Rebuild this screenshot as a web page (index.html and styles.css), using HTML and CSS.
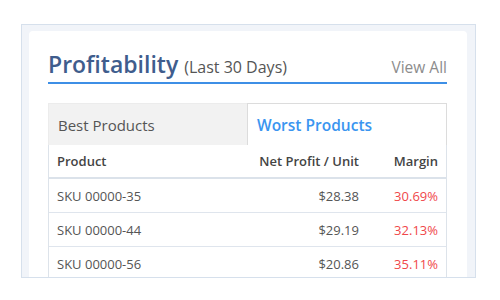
FILE: index.html
```html
<!DOCTYPE html>
<html>
<head>
<meta charset="utf-8">
<link rel="stylesheet" href="styles.css">
</head>
<body>
<div class="frame">
  <div class="card">
    <div class="head">
      <h2 class="title">Profitability <span class="sub">(Last 30 Days)</span></h2>
      <a class="view-all">View All</a>
    </div>
    <div class="tabs">
      <div class="tab">Best Products</div>
      <div class="tab active">Worst Products</div>
    </div>
    <div class="table">
      <div class="row header">
        <div class="c1">Product</div>
        <div class="c2">Net Profit / Unit</div>
        <div class="c3">Margin</div>
      </div>
      <div class="row">
        <div class="c1">SKU 00000-35</div>
        <div class="c2">$28.38</div>
        <div class="c3 neg">30.69%</div>
      </div>
      <div class="row">
        <div class="c1">SKU 00000-44</div>
        <div class="c2">$29.19</div>
        <div class="c3 neg">32.13%</div>
      </div>
      <div class="row">
        <div class="c1">SKU 00000-56</div>
        <div class="c2">$20.86</div>
        <div class="c3 neg">35.11%</div>
      </div>
    </div>
  </div>
</div>
</body>
</html>
```
FILE: styles.css
```css
html, body {
  margin: 0;
  padding: 0;
  background: #ffffff;
  font-family: "Open Sans", "Noto Sans", sans-serif;
}
.frame {
  margin: 24px 0 0 21px;
  width: 438px;
  height: 246px;
  padding: 6px 8px 0 7px;
  border: 1px solid #d6e0ec;
  background: #f1f4f9;
  overflow: hidden;
}
.card {
  background: #ffffff;
  border-radius: 4px;
  padding: 18px 20px 0 19px;
  height: 300px;
}
.head {
  display: flex;
  justify-content: space-between;
  align-items: baseline;
  border-bottom: 2px solid #3d8fe6;
  padding-bottom: 3px;
}
.title {
  margin: 0;
  font-size: 23px;
  line-height: 30px;
  font-weight: 600;
  color: #3f5d8d;
}
.sub {
  font-size: 16px;
  line-height: 1;
  font-weight: 400;
  color: #555555;
}
.view-all {
  font-size: 15.5px;
  line-height: 1;
  color: #8c8c8c;
}
.tabs {
  margin-top: 19px;
  display: flex;
}
.tab {
  flex: 1;
  height: 42px;
  box-sizing: border-box;
  padding-left: 9px;
  display: flex;
  align-items: center;
  font-size: 15px;
  color: #555555;
  background: #f2f2f2;
  border-top: 1px solid #ececec;
  border-left: 1px solid #ececec;
}
.tab.active {
  background: #ffffff;
  color: #3a95f0;
  font-weight: 600;
  font-size: 15.5px;
  border: 1px solid #dcdcdc;
  border-bottom: none;
}
.table {
  border-left: 1px solid #dde3ea;
  border-right: 1px solid #dde3ea;
}
.row {
  display: grid;
  grid-template-columns: 1fr 150px 87px;
  box-sizing: border-box;
  height: 34px;
  align-items: center;
  border-bottom: 1px solid #dfe5ed;
  font-size: 13px;
  color: #555555;
}
.row.header {
  height: 34px;
  border-bottom: 2px solid #dbe2ea;
  font-weight: 600;
  color: #444444;
}
.c1 {
  padding-left: 8px;
}
.c2 {
  text-align: right;
}
.c3 {
  text-align: right;
  padding-right: 8px;
}
.neg {
  color: #f0474a;
}
```
